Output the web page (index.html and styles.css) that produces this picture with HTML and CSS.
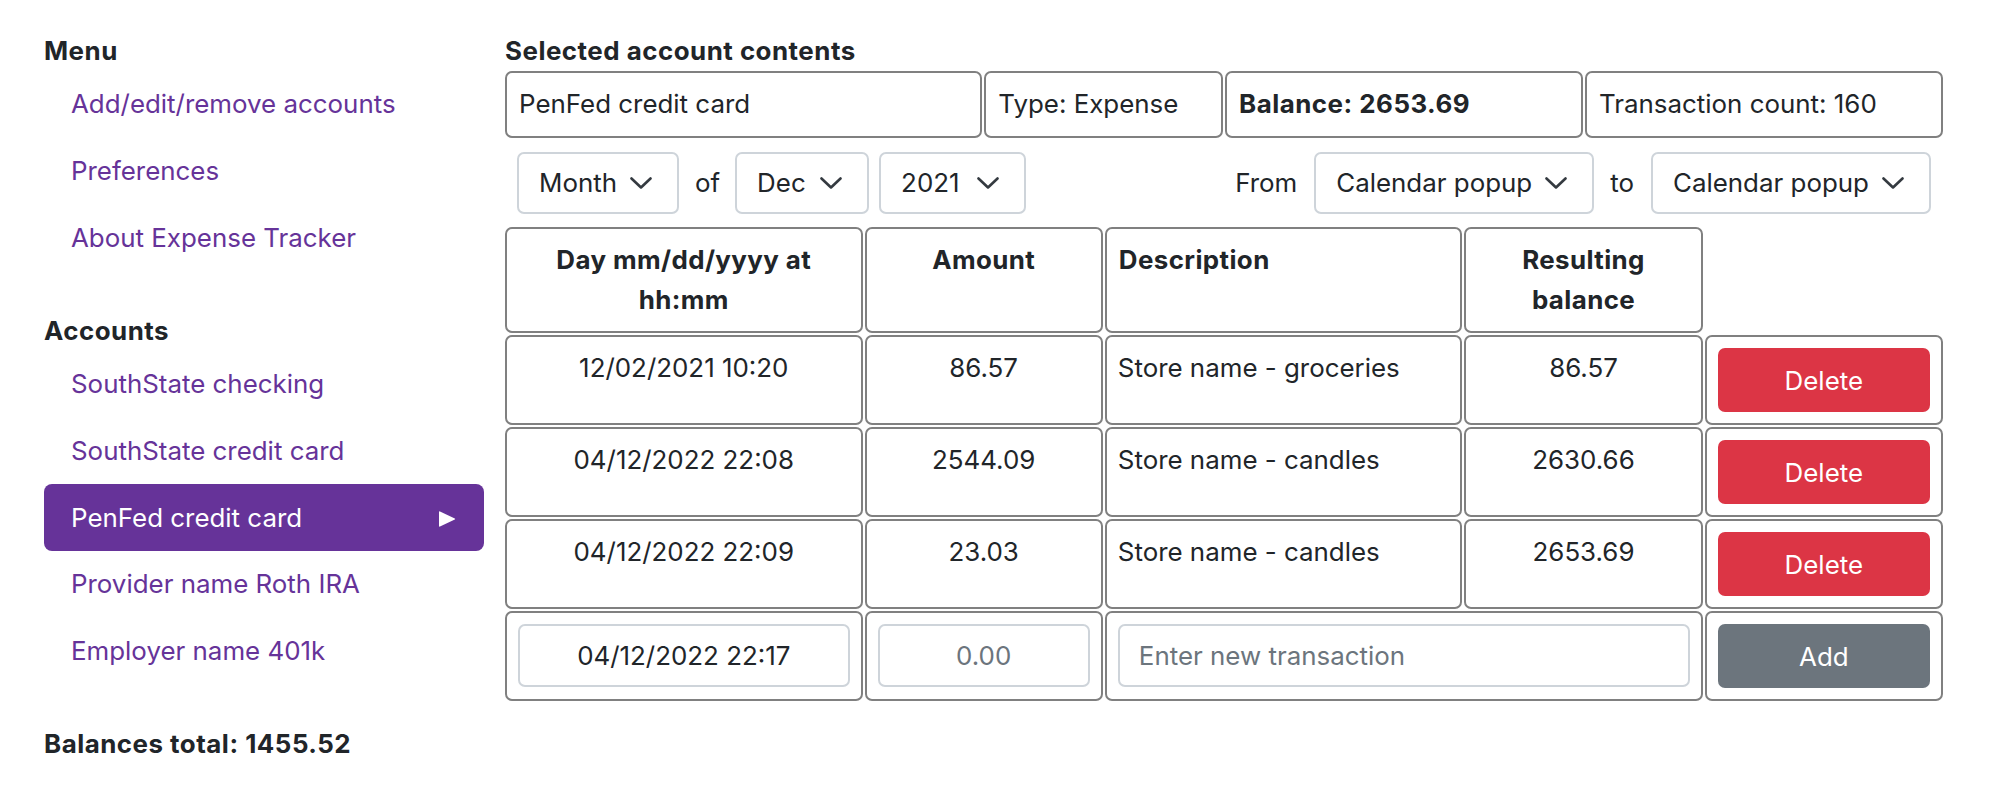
FILE: index.html
```html
<!DOCTYPE html>
<html lang="en">
<head>
<meta charset="utf-8">
<title>Expense Tracker</title>
<link rel="stylesheet" href="styles.css">
</head>
<body>
<div class="page">
  <aside class="sidebar">
    <div class="section-title">Menu</div>
    <nav class="nav">
      <a class="nav-link" href="#">Add/edit/remove accounts</a>
      <a class="nav-link" href="#">Preferences</a>
      <a class="nav-link" href="#">About Expense Tracker</a>
    </nav>
    <div class="section-title spaced">Accounts</div>
    <nav class="nav">
      <a class="nav-link" href="#">SouthState checking</a>
      <a class="nav-link" href="#">SouthState credit card</a>
      <a class="nav-link active" href="#"><span>PenFed credit card</span><svg class="play" width="18" height="18" viewBox="0 0 18 18"><path d="M2 1.5 Q1 1 1 2.2 L1 15.8 Q1 17 2 16.5 L16.8 9.6 Q17.6 9 16.8 8.4 Z" fill="#fff"/></svg></a>
      <a class="nav-link" href="#">Provider name Roth IRA</a>
      <a class="nav-link" href="#">Employer name 401k</a>
    </nav>
    <div class="section-title spaced">Balances total: 1455.52</div>
  </aside>

  <main class="main">
    <div class="section-title">Selected account contents</div>
    <div class="info">
      <div class="info-box">PenFed credit card</div>
      <div class="info-box">Type: Expense</div>
      <div class="info-box strong">Balance: 2653.69</div>
      <div class="info-box">Transaction count: 160</div>
    </div>

    <div class="filters">
      <div class="select w-month"><span>Month</span><svg class="chev" width="22" height="12" viewBox="0 0 22 12"><path d="M1.5 1.5 L11 10.5 L20.5 1.5" fill="none" stroke="#343a40" stroke-width="2.6" stroke-linecap="round" stroke-linejoin="round"/></svg></div>
      <span class="label of">of</span>
      <div class="select w-dec"><span>Dec</span><svg class="chev" width="22" height="12" viewBox="0 0 22 12"><path d="M1.5 1.5 L11 10.5 L20.5 1.5" fill="none" stroke="#343a40" stroke-width="2.6" stroke-linecap="round" stroke-linejoin="round"/></svg></div>
      <div class="select w-year"><span>2021</span><svg class="chev" width="22" height="12" viewBox="0 0 22 12"><path d="M1.5 1.5 L11 10.5 L20.5 1.5" fill="none" stroke="#343a40" stroke-width="2.6" stroke-linecap="round" stroke-linejoin="round"/></svg></div>
      <div class="spacer"></div>
      <span class="label from">From</span>
      <div class="select w-cal"><span>Calendar popup</span><svg class="chev" width="22" height="12" viewBox="0 0 22 12"><path d="M1.5 1.5 L11 10.5 L20.5 1.5" fill="none" stroke="#343a40" stroke-width="2.6" stroke-linecap="round" stroke-linejoin="round"/></svg></div>
      <span class="label to">to</span>
      <div class="select w-cal"><span>Calendar popup</span><svg class="chev" width="22" height="12" viewBox="0 0 22 12"><path d="M1.5 1.5 L11 10.5 L20.5 1.5" fill="none" stroke="#343a40" stroke-width="2.6" stroke-linecap="round" stroke-linejoin="round"/></svg></div>
    </div>

    <div class="table">
      <div class="cell head center">Day mm/dd/yyyy at hh:mm</div>
      <div class="cell head center">Amount</div>
      <div class="cell head">Description</div>
      <div class="cell head center">Resulting balance</div>
      <div class="cell empty"></div>

      <div class="cell center">12/02/2021 10:20</div>
      <div class="cell center">86.57</div>
      <div class="cell">Store name - groceries</div>
      <div class="cell center">86.57</div>
      <div class="cell"><button class="btn btn-danger">Delete</button></div>

      <div class="cell center">04/12/2022 22:08</div>
      <div class="cell center">2544.09</div>
      <div class="cell">Store name - candles</div>
      <div class="cell center">2630.66</div>
      <div class="cell"><button class="btn btn-danger">Delete</button></div>

      <div class="cell center">04/12/2022 22:09</div>
      <div class="cell center">23.03</div>
      <div class="cell">Store name - candles</div>
      <div class="cell center">2653.69</div>
      <div class="cell"><button class="btn btn-danger">Delete</button></div>

      <div class="cell"><input class="input center" type="text" value="04/12/2022 22:17"></div>
      <div class="cell"><input class="input center" type="text" placeholder="0.00"></div>
      <div class="cell span2"><input class="input" type="text" placeholder="Enter new transaction"></div>
      <div class="cell"><button class="btn btn-secondary">Add</button></div>
    </div>
  </main>
</div>
</body>
</html>
```

FILE: styles.css
```css
* {
  box-sizing: border-box;
}

html, body {
  margin: 0;
  padding: 0;
  background: #ffffff;
}

body {
  font-family: "Inter", "Noto Sans", "DejaVu Sans", sans-serif;
  font-size: 25.9px;
  line-height: 40px;
  color: #212529;
}

.page {
  display: flex;
  gap: 21px;
  padding: 31px 46px 0 44px;
}

.sidebar {
  width: 440px;
  flex: none;
}

.main {
  flex: 1;
  min-width: 0;
}

.section-title {
  font-weight: 700;
  line-height: 40px;
  letter-spacing: 0.5px;
}

.section-title.spaced {
  margin-top: 40px;
}

.nav {
  display: flex;
  flex-direction: column;
}

.nav-link {
  display: flex;
  align-items: center;
  justify-content: space-between;
  height: 66.667px;
  padding: 0 28px 0 27px;
  color: #663399;
  text-decoration: none;
  border-radius: 8px;
}

.nav-link.active {
  background: #663399;
  color: #ffffff;
}

.play {
  display: block;
  margin-top: 2px;
}

/* Info boxes */
.info {
  display: grid;
  grid-template-columns: 4fr 2fr 3fr 3fr;
  gap: 2px;
}

.info-box {
  border: 2px solid #808080;
  border-radius: 7px;
  padding: 11.333px 12px;
  line-height: 40px;
  white-space: nowrap;
  overflow: hidden;
}

.strong {
  font-weight: 700;
  letter-spacing: 0.5px;
}

/* Filters */
.filters {
  display: flex;
  align-items: center;
  margin: 14px 0 13px;
  padding: 0 12px;
}

.select {
  display: flex;
  align-items: center;
  justify-content: space-between;
  height: 62.667px;
  border: 2px solid #ced4da;
  border-radius: 7px;
  padding: 0 25px 0 20px;
  background: #fff;
  flex: none;
}

.chev {
  display: block;
  flex: none;
}

.w-month { width: 162px; }
.w-dec { width: 134px; margin-right: 10px; }
.w-year { width: 147px; }
.w-cal { width: 280px; }

.label.of { margin: 0 15px 0 16px; }
.label.from { margin-right: 17px; }
.label.to { margin: 0 17px 0 16px; }

.spacer {
  flex: 1;
}

/* Table */
.table {
  display: grid;
  grid-template-columns: 3fr 2fr 3fr 2fr 2fr;
  gap: 2px;
}

.cell {
  border: 2px solid #808080;
  border-radius: 7px;
  padding: 11px 11px;
  line-height: 40px;
  min-width: 0;
}

.cell.empty {
  border-color: transparent;
}

.cell.head {
  font-weight: 700;
  letter-spacing: 0.4px;
  padding: 11px 12px;
}

.cell.center {
  text-align: center;
}

.cell.span2 {
  grid-column: span 2;
}

.btn {
  display: block;
  width: 100%;
  height: 64px;
  border: none;
  border-radius: 7px;
  font-family: inherit;
  font-size: 25.9px;
  color: #ffffff;
  padding: 0;
  cursor: pointer;
}

.btn-danger {
  background: #dc3545;
}

.btn-secondary {
  background: #6c757d;
}

.input {
  display: block;
  width: 100%;
  height: 63px;
  border: 2px solid #ced4da;
  border-radius: 7px;
  padding: 0 19px;
  font-family: inherit;
  font-size: 25.9px;
  color: #212529;
  background: #fff;
  outline: none;
}

.input.center {
  text-align: center;
}

.input::placeholder {
  color: #6c757d;
  opacity: 1;
}
```
